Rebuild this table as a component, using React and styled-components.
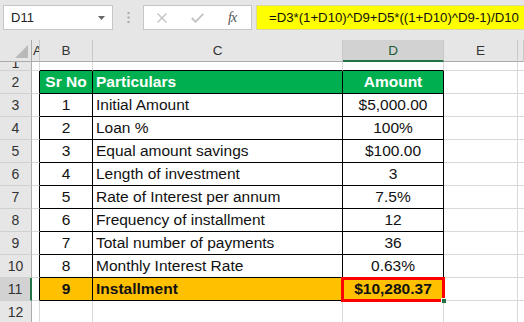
import React from "react";
import styled, { createGlobalStyle } from "styled-components";

const GlobalStyle = createGlobalStyle`
  html, body {
    margin: 0;
    padding: 0;
    background: #fff;
    overflow: hidden;
  }
  body {
    font-family: "Liberation Sans", Arial, sans-serif;
  }
`;

const COLS = "32px 8px 53px 250px 101px 74px 1fr";

const Page = styled.div`
  width: 524px;
  height: 322px;
  overflow: hidden;
  display: flex;
  flex-direction: column;
`;

/* formula bar */
const Toolbar = styled.div`
  height: 40px;
  flex: none;
  box-sizing: border-box;
  background: #e6e6e6;
  padding: 5px 0 0 3px;
  display: flex;
  align-items: flex-start;
`;

const NameBox = styled.div`
  width: 110px;
  height: 25px;
  box-sizing: border-box;
  background: #fff;
  border: 1px solid #c6c6c6;
  display: flex;
  align-items: center;
  justify-content: space-between;
  padding: 0 7px 0 7px;
  font-size: 13px;
  color: #222;
`;

const Dots = styled.div`
  width: 30px;
  height: 25px;
  display: flex;
  align-items: center;
  justify-content: center;
`;

const FxBox = styled.div`
  width: 109px;
  height: 25px;
  box-sizing: border-box;
  background: #fff;
  border: 1px solid #c6c6c6;
  display: flex;
  align-items: center;
  padding-left: 13px;
  gap: 24px;
`;

const FxLabel = styled.span`
  font-family: "Liberation Serif", "Times New Roman", serif;
  font-style: italic;
  font-size: 14px;
  color: #555;
  letter-spacing: -1px;
`;

const Formula = styled.div`
  flex: 1;
  height: 25px;
  box-sizing: border-box;
  margin-left: 4px;
  background: #ffff00;
  border: 1px solid #d8d8a0;
  border-right: none;
  display: flex;
  align-items: center;
  padding-left: 12px;
  font-size: 13.2px;
  color: #111;
  white-space: nowrap;
  overflow: hidden;
`;

/* sheet */
const Row = styled.div`
  display: grid;
  grid-template-columns: ${COLS};
  height: ${(p) => p.$h}px;
  flex: none;
`;

const ColHead = styled.div`
  box-sizing: border-box;
  background: ${(p) => (p.$active ? "#d2d2d2" : "#e6e6e6")};
  border-right: 1px solid #c8c8c8;
  border-bottom: ${(p) => (p.$active ? "2px solid #217346" : "1px solid #ababab")};
  display: flex;
  align-items: center;
  justify-content: ${(p) => p.$justify || "center"};
  padding-left: ${(p) => (p.$justify ? "1px" : "0")};
  font-size: 13.5px;
  color: ${(p) => (p.$active ? "#1c5e3a" : "#333")};
  overflow: hidden;
  white-space: nowrap;
`;

const Corner = styled(ColHead)`
  border-right: 1px solid #ababab;
  align-items: flex-end;
  justify-content: flex-end;
  padding: 0 3px 3px 0;
`;

const RowHead = styled.div`
  box-sizing: border-box;
  background: ${(p) => (p.$active ? "#d2d2d2" : "#e6e6e6")};
  border-right: ${(p) => (p.$active ? "2px solid #217346" : "1px solid #ababab")};
  border-bottom: 1px solid #d0d0d0;
  display: flex;
  align-items: ${(p) => (p.$clip ? "flex-end" : "center")};
  justify-content: center;
  font-size: 14px;
  line-height: 14px;
  color: #333;
  overflow: hidden;
`;

const Cell = styled.div`
  position: relative;
  box-sizing: border-box;
  background: ${(p) => p.$bg || "#fff"};
  border-right: 1px solid ${(p) => p.$br || "#d9d9d9"};
  border-bottom: 1px solid ${(p) => p.$bb || "#d9d9d9"};
  display: flex;
  align-items: center;
  justify-content: ${(p) => p.$align || "flex-start"};
  padding: 0 3px;
  font-size: 15.5px;
  font-weight: ${(p) => (p.$bold ? 700 : 400)};
  color: ${(p) => p.$color || "#111"};
  white-space: nowrap;
  overflow: ${(p) => (p.$selected ? "visible" : "hidden")};
  z-index: ${(p) => (p.$selected ? 2 : "auto")};
`;

const Selection = styled.div`
  position: absolute;
  top: -1px;
  left: -2px;
  right: -2px;
  bottom: -2px;
  border: 3px solid #ff0000;
  pointer-events: none;
`;

const FillHandle = styled.div`
  position: absolute;
  right: -4px;
  bottom: -4px;
  width: 4px;
  height: 4px;
  background: #217346;
  border-top: 1px solid #fff;
  border-left: 1px solid #fff;
`;

const data = [
  ["1", "Initial Amount", "$5,000.00"],
  ["2", "Loan %", "100%"],
  ["3", "Equal amount savings", "$100.00"],
  ["4", "Length of investment", "3"],
  ["5", "Rate of Interest per annum", "7.5%"],
  ["6", "Frequency of installment", "12"],
  ["7", "Total number of payments", "36"],
  ["8", "Monthly Interest Rate", "0.63%"],
];

const B = "#000";

const CornerTriangle = () => (
  <svg width="13" height="13" viewBox="0 0 13 13">
    <polygon points="13,0 13,13 0,13" fill="#b9b9b9" />
  </svg>
);

const Dropdown = () => (
  <svg width="7" height="4" viewBox="0 0 7 4">
    <polygon points="0,0 7,0 3.5,4" fill="#666" />
  </svg>
);

const VDots = () => (
  <svg width="3" height="11" viewBox="0 0 3 11">
    <rect x="0.5" y="0" width="2" height="2" fill="#a6a6a6" />
    <rect x="0.5" y="4.5" width="2" height="2" fill="#a6a6a6" />
    <rect x="0.5" y="9" width="2" height="2" fill="#a6a6a6" />
  </svg>
);

const Cross = () => (
  <svg width="10" height="10" viewBox="0 0 10 10">
    <path d="M0.5 0.5 L9.5 9.5 M9.5 0.5 L0.5 9.5" stroke="#c2c2c2" strokeWidth="1.4" fill="none" />
  </svg>
);

const Check = () => (
  <svg width="13" height="10" viewBox="0 0 13 10">
    <path d="M0.8 5 L4.5 8.8 L12.3 0.8" stroke="#c2c2c2" strokeWidth="1.8" fill="none" />
  </svg>
);

const TableRow = ({ n, sr, label, value, bold, bg, last, selected }) => (
  <Row $h={23}>
    <RowHead $active={selected}>{n}</RowHead>
    <Cell $br={B} />
    <Cell $br={B} $bb={B} $bg={bg} $align="center" $bold={bold}>
      {sr}
    </Cell>
    <Cell $br={B} $bb={B} $bg={bg} $bold={bold}>
      {label}
    </Cell>
    <Cell $br={B} $bb={B} $bg={bg} $align="center" $bold={bold} $selected={selected}>
      {value}
      {selected && (
        <Selection>
          <FillHandle />
        </Selection>
      )}
    </Cell>
    <Cell />
    <Cell $br="#fff" />
  </Row>
);

export default function App() {
  return (
    <Page>
      <GlobalStyle />
      <Toolbar>
        <NameBox>
          <span>D11</span>
          <Dropdown />
        </NameBox>
        <Dots>
          <VDots />
        </Dots>
        <FxBox>
          <Cross />
          <Check />
          <FxLabel>fx</FxLabel>
        </FxBox>
        <Formula>=D3*(1+D10)^D9+D5*((1+D10)^D9-1)/D10</Formula>
      </Toolbar>

      <Row $h={22}>
        <Corner>
          <CornerTriangle />
        </Corner>
        <ColHead $justify="flex-start">A</ColHead>
        <ColHead>B</ColHead>
        <ColHead>C</ColHead>
        <ColHead $active>D</ColHead>
        <ColHead>E</ColHead>
        <ColHead />
      </Row>

      <Row $h={9}>
        <RowHead $clip>1</RowHead>
        <Cell />
        <Cell $bb={B} />
        <Cell $bb={B} />
        <Cell $bb={B} />
        <Cell />
        <Cell $br="#fff" />
      </Row>

      <Row $h={23}>
        <RowHead>2</RowHead>
        <Cell $br={B} />
        <Cell $br={B} $bb={B} $bg="#00b050" $align="center" $bold $color="#fff">
          Sr No
        </Cell>
        <Cell $br={B} $bb={B} $bg="#00b050" $bold $color="#fff">
          Particulars
        </Cell>
        <Cell $br={B} $bb={B} $bg="#00b050" $align="center" $bold $color="#fff">
          Amount
        </Cell>
        <Cell />
        <Cell $br="#fff" />
      </Row>

      {data.map((d, i) => (
        <TableRow key={d[0]} n={i + 3} sr={d[0]} label={d[1]} value={d[2]} />
      ))}

      <TableRow n={11} sr="9" label="Installment" value="$10,280.37" bold bg="#ffc000" selected />

      <Row $h={23}>
        <RowHead>12</RowHead>
        <Cell />
        <Cell />
        <Cell />
        <Cell />
        <Cell />
        <Cell $br="#fff" />
      </Row>
    </Page>
  );
}
